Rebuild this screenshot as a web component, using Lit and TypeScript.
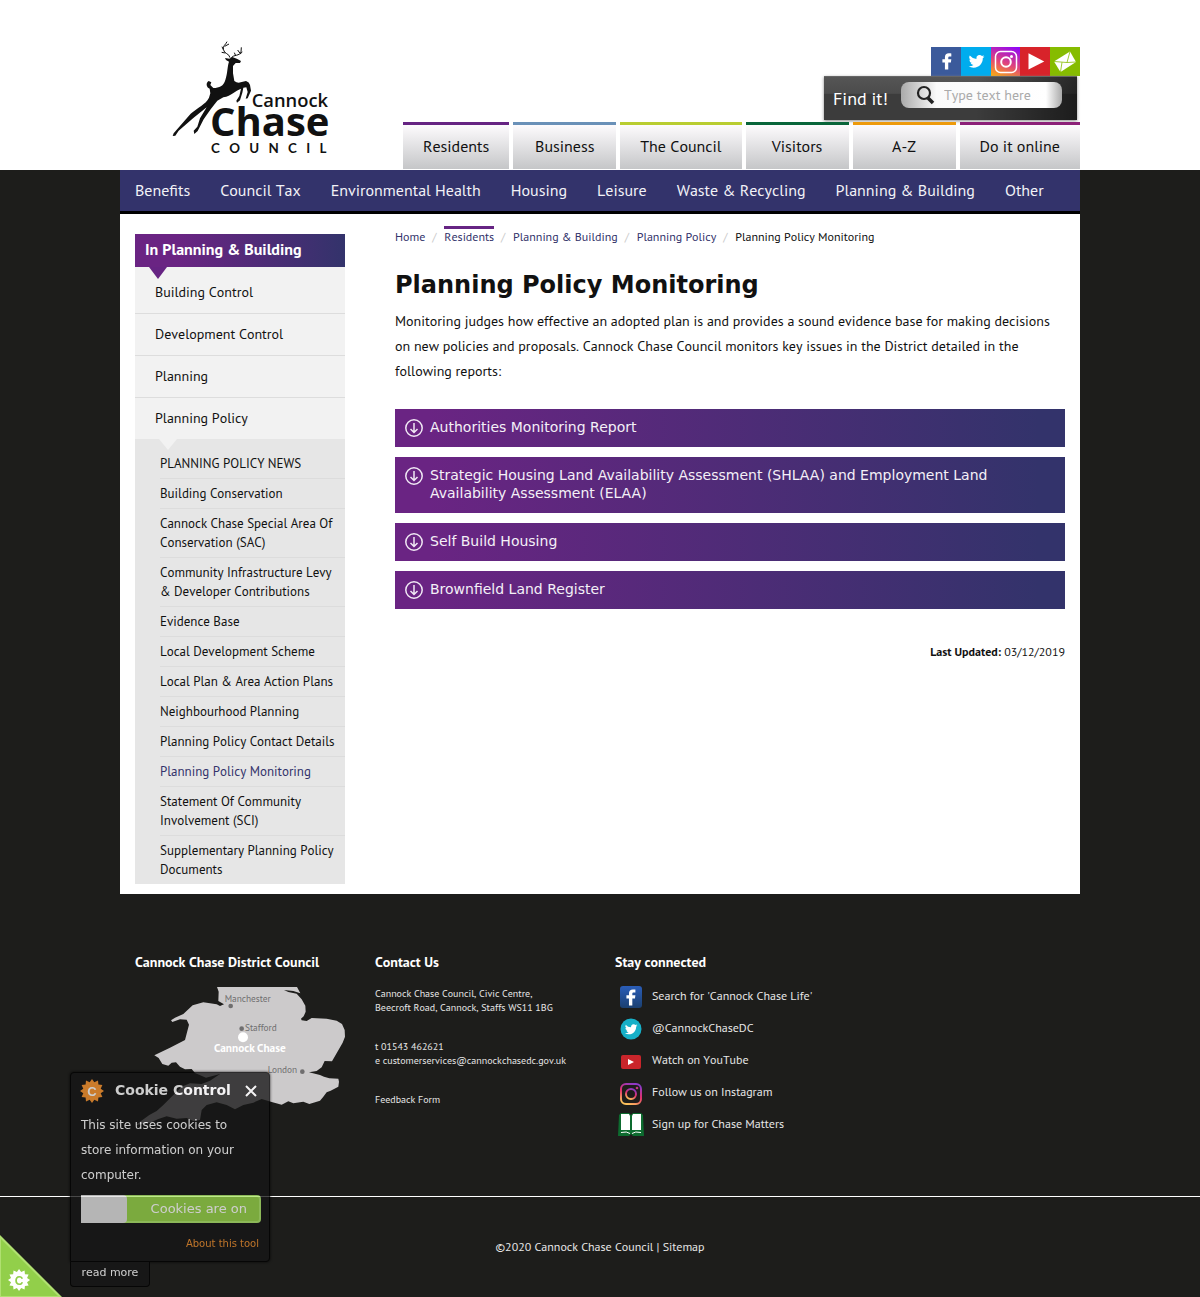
import { LitElement, html, svg, css } from "lit";
import { customElement, state } from "lit/decorators.js";
import { classMap } from "lit/directives/class-map.js";

const bird =
  "M22 6.2a7 7 0 0 1-2.1.6 3.7 3.7 0 0 0 1.6-2 7.3 7.3 0 0 1-2.3.9A3.7 3.7 0 0 0 12.9 9 10.4 10.4 0 0 1 5.3 5.2a3.7 3.7 0 0 0 1.1 4.9 3.7 3.7 0 0 1-1.6-.5 3.7 3.7 0 0 0 2.9 3.7 3.7 3.7 0 0 1-1.6.1 3.7 3.7 0 0 0 3.4 2.5A7.4 7.4 0 0 1 4 17.5 10.4 10.4 0 0 0 9.7 19.1c6.8 0 10.5-5.6 10.5-10.5v-.5A7.5 7.5 0 0 0 22 6.2z";
const letterF = "M14 21v-7.8h3l.5-3.8H14V7.7c0-1 .5-1.5 1.7-1.5h1.8V2.9C17 2.8 16 2.7 14.7 2.7c-2.9 0-4.5 1.6-4.5 4.3v2.4H7.3v3.8h2.9V21z";
const cog = (() => {
  const pts: string[] = [];
  for (let i = 0; i < 24; i++) {
    const r = i % 2 ? 9 : 12;
    const a = (i * Math.PI) / 12;
    pts.push(`${(12 + r * Math.sin(a)).toFixed(1)},${(12 - r * Math.cos(a)).toFixed(1)}`);
  }
  return pts.join(" ");
})();

const logo = svg`<svg class="logo-art" viewBox="30 30 480 345" role="img" aria-label="Cannock Chase Council">
  <path d="M195 84 L208 86 L217 81 L232 87 L243 93 L240 99 L227 99 L219 108 L219 130 L223 153 Q232 160 242 157 L258 153 Q268 156 270 165 L273 182 L263 205 L257 206 L263 186 L259 172 L250 173 L247 188 L240 211 L231 218 L229 212 L238 198 L243 176 C225 182 215 197 190 202 L172 212 L152 238 L131 268 L113 303 L103 312 L101 302 L112 290 L120 265 L140 232 L100 264 L56 302 L46 317 L38 318 L41 310 L92 251 C112 234 138 222 147 203 L151 190 L149 176 C138 172 137 158 146 153 L154 157 L151 165 L160 174 C178 174 191 168 196 150 C203 130 202 108 207 95 L198 90 Z"/>
  <g fill="none" stroke="#111" stroke-width="3"><path d="M210 83C208 70 192 72 190 58C188 48 197 44 201 35M190 59L186 50M196 69L185 67M194 49L207 42M214 83C220 74 240 78 243 66L244 52M240 72L247 66M240 70L233 60M227 77L223 68"/></g>
  <text class="w1" x="275" y="231">Cannock</text>
  <text class="w2" x="150" y="318">Chase</text>
  <text class="w3" x="153" y="370">COUNCIL</text>
</svg>`;

const map = svg`<svg class="map" viewBox="45 141 630 420" role="img" aria-label="Map of Cannock Chase">
  <path fill="#cccacb" d="M291 141H531L541 160L520 153L492 150L505 156L530 161L545 178L556 197L557 215L551 229L543 236L545 241L560 243L575 234L620 236L650 242L666 252L674 270L675 290L668 308L636 364L614 363L605 382L590 393L567 397L600 405L612 410L628 415L655 416L657 425L655 440L632 452L620 457L610 470L600 482L568 492L550 485L520 490L505 484L485 494L455 486L425 477L400 488L370 495L345 508L320 495L290 487L260 495L245 510L240 540L220 543L200 534L170 536L140 529L115 537L90 548L48 555L60 545L88 525L110 513L130 495L160 465L185 440L210 430L245 432L270 422L300 402L258 413L225 399L215 387L195 388L180 380L168 367L155 368L145 377L127 372L116 354L103 346L150 323L195 300L207 254L200 239L180 238L157 246L153 241L165 233L190 222L218 196L250 187L290 193L300 198L312 193L295 183L296 155Z"/>
  <g fill="#6f6e6f"><circle cx="332" cy="198" r="7"/><circle cx="365" cy="266" r="7"/><circle cx="547" cy="395" r="7"/></g>
  <circle cx="369" cy="292" r="15" fill="#fff"/>
  <g class="town"><text x="314" y="185">Manchester</text><text x="375" y="272">Stafford</text><text x="443" y="400">London</text></g>
  <text class="here" x="282" y="335">Cannock Chase</text>
</svg>`;

const social = [
  { label: "Facebook", cls: "fb", art: svg`<path fill="#fff" d=${letterF}/>` },
  { label: "Twitter", cls: "tw", art: svg`<path fill="#fff" transform="translate(-1)" d=${bird}/>` },
  { label: "Instagram", cls: "ig", art: svg`<g fill="none" stroke="#fff"><rect x="1.5" y="1.5" width="21" height="21" rx="5" stroke-width="1.5"/><circle cx="12" cy="12" r="4.8" stroke-width="2"/></g><circle cx="17.5" cy="6.5" r="1.5" fill="#fff"/>` },
  { label: "YouTube", cls: "yt", art: svg`<path fill="#fff" d="M4 2.500L22 12L4 21Z"/>` },
  { label: "Email updates", cls: "em", art: svg`<path fill="#fff" d="M1 11.500L17 1.500L23 12L7.500 22Z"/><path fill="none" stroke="#86bc00" stroke-width=".8" d="M1 11.500L14 12.500L17 1.500M7.500 22L9 12.200M23 12L14 12.500"/>` },
];

const tabs = [
  ["Residents", "purple"],
  ["Business", "blue"],
  ["The Council", "lime"],
  ["Visitors", "green"],
  ["A-Z", "orange"],
  ["Do it online", "magenta"],
];
const topics = ["Benefits", "Council Tax", "Environmental Health", "Housing", "Leisure", "Waste & Recycling", "Planning & Building", "Other"];
const sections = ["Building Control", "Development Control", "Planning", "Planning Policy"];
const policyPages = [
  "PLANNING POLICY NEWS",
  "Building Conservation",
  "Cannock Chase Special Area Of Conservation (SAC)",
  "Community Infrastructure Levy & Developer Contributions",
  "Evidence Base",
  "Local Development Scheme",
  "Local Plan & Area Action Plans",
  "Neighbourhood Planning",
  "Planning Policy Contact Details",
  "Planning Policy Monitoring",
  "Statement Of Community Involvement (SCI)",
  "Supplementary Planning Policy Documents",
];
const reports = [
  "Authorities Monitoring Report",
  "Strategic Housing Land Availability Assessment (SHLAA) and Employment Land Availability Assessment (ELAA)",
  "Self Build Housing",
  "Brownfield Land Register",
];
const follow = [
  {
    text: "Search for 'Cannock Chase Life'",
    art: svg`<defs><linearGradient id="f1" x2="0" y2="1"><stop stop-color="#2a5db8"/><stop offset="1" stop-color="#1b4070"/></linearGradient></defs><rect x="2" y="2" width="22" height="22" rx="3" fill="url(#f1)"/><path fill="#fff" transform="translate(2 3) scale(.88)" d=${letterF}/>`,
  },
  { text: "@CannockChaseDC", art: svg`<circle cx="13" cy="13" r="10.5" fill="#17b0c8"/><path fill="#fff" transform="translate(4 5) scale(.7)" d=${bird}/>` },
  { text: "Watch on YouTube", art: svg`<rect x="3" y="7" width="20" height="14" rx="2" fill="#c9252b"/><path fill="#fff" d="M10 11L16 14L10 17Z"/>` },
  {
    text: "Follow us on Instagram",
    art: svg`<defs><linearGradient id="f2" x1="0.700" y1="0" x2="0.300" y2="1"><stop stop-color="#8a3ac8"/><stop offset=".5" stop-color="#e1306c"/><stop offset="1" stop-color="#fcc25a"/></linearGradient></defs><g fill="none" stroke="url(#f2)" stroke-width="2"><rect x="3" y="4" width="20" height="20" rx="5"/><circle cx="13" cy="14" r="5"/></g><circle cx="19" cy="8" r="1.300" fill="#c13584"/>`,
  },
  {
    text: "Sign up for Chase Matters",
    art: svg`<path fill="#0d6b2f" d="M0 24L1 3L3 1H11L13 3L15 1H23L25 3L26 24H15L13 22L11 24Z"/><path fill="#fff" d="M3 2H11L12 4V18H3ZM15 2H23V18H14V4Z"/><path stroke="#fff" fill="none" d="M3 20.500Q9 19 12 21.500M14 21.500Q17 19 23 20.500"/>`,
  },
];

@customElement("app-root")
export class AppRoot extends LitElement {
  @state() private cookieOpen = true;

  static styles = css`
    :host { display: block; background: #1d1d1b; color: #111; font: 14px/25px "PT Sans", "Noto Sans", sans-serif; font-kerning: none; }
    *, *::before, *::after { box-sizing: border-box; }
    a { color: inherit; text-decoration: none; }
    ul, ol { list-style: none; margin: 0; padding: 0; }
    h1, h2, p { margin: 0; }
    svg { display: block; }
    .wrap { max-width: 960px; margin: 0 auto; }

    .header { background: #fff; padding-top: 40px; }
    .header .wrap { display: flex; justify-content: space-between; align-items: flex-start; }
    .logo { margin-left: 50px; }
    .logo-art { width: 160px; height: 115px; fill: #111; overflow: visible; }
    .logo-art text { font-family: "Open Sans", sans-serif; font-weight: 700; }
    .logo-art .w1 { font-size: 55px; font-weight: 600; }
    .w2 { font-size: 120px; }
    .logo-art .w3 { font-family: Lato, sans-serif; font-size: 40px; letter-spacing: 28px; }
    .tools { display: flex; flex-direction: column; align-items: flex-end; padding-top: 7px; }
    .social { display: flex; }
    .social a { display: grid; place-items: center; width: 30px; height: 29px; }
    .social svg { width: 24px; height: 24px; }
    .social .fb svg, .social .yt svg, .social .tw svg { width: 21px; height: 21px; }
    .fb { background: #3b5a9b; }
    .tw { background: #00acee; }
    .social .ig { width: 29px; background: linear-gradient(20deg, #fdb10a, #e0457b 45%, #8a00ff); }
    .yt { background: #d8232a; }
    .em { background: #86bc00; }
    .search { display: flex; align-items: center; justify-content: space-between; width: 253px; height: 44px; margin: 0 3px 2px 0; padding: 0 15px 0 9px; color: #fff; font-size: 18px;
      background: linear-gradient(90deg, #0000 60%, #0008), linear-gradient(#555 0, #4c4c4c 38%, #3c3c3c 40%, #3c3c3c 100%); box-shadow: 0 1px 3px #888; border-top: 1px solid #666; }
    .search label { white-space: nowrap; }
    .pill { display: flex; align-items: center; width: 161px; height: 26px; margin-bottom: 7px; padding-left: 14px; border-radius: 8px;
      background: linear-gradient(90deg, #aaa, #fafafa 22%, #fff 90%, #aaa); }
    .pill button { border: 0; padding: 0; background: none; }
    .pill svg { width: 20px; height: 20px; }
    .pill input { flex: 1; min-width: 0; height: 25px; margin: 0 10px 0 9px; padding: 0; border: 0; outline: 0; background: none; font: inherit; font-size: 14px; color: #111; }
    .pill input::placeholder { color: #aaa; opacity: 1; }

    .tabs { display: flex; gap: 4px; margin-bottom: 1px; }
    .tabs a { display: block; min-width: 103px; height: 47px; padding: 0 20px; border-top-width: 3px; border-top-style: solid; text-align: center; font-size: 16px; line-height: 42px; background: linear-gradient(#fdfbfd, #c5c6c8); }
    .purple { border-color: #662483; }
    .blue { border-color: #6a91b8; }
    .lime { border-color: #b9cd31; }
    .green { border-color: #09653a; }
    .orange { border-color: #ed9a0c; }
    .magenta { border-color: #8c2078; }

    .topics { display: flex; background: #33336b; border-bottom: 3px solid #000; color: #f2f2f7; font-size: 16px; line-height: 41px; }
    .topics a { display: block; padding: 0 15px; }

    .page { display: grid; grid-template-columns: 210px 1fr; gap: 50px; padding: 0 15px 10px; background: #fff; }
    .side { padding-top: 20px; }
    .side h2 { position: relative; padding: 0 10px 2px; font-size: 16px; line-height: 31px; color: #fff; background: linear-gradient(90deg, #6a2483 20%, #33336b); }
    .side h2::after, .sub::before { content: ""; position: absolute; top: 100%; left: 14px; border: solid transparent; border-width: 12px 9px 0; border-top-color: #662483; }
    .sections { background: #f2f2f2; padding-top: 5px; }
    .sections > li > a { display: block; height: 42px; padding: 0 20px; line-height: 41px; border-bottom: 1px solid #ddd; }
    .sections > li:last-child > a { height: 41px; border: 0; }
    .sub { position: relative; padding: 10px 0 0 25px; background: #e6e6e6; font-size: 13px; line-height: 19px; }
    .sub::before { top: 0; left: 24px; border-width: 11px 9px 0; border-top-color: #f2f2f2; }
    .sub a { display: block; padding: 5px 10px 5px 0; border-bottom: 1px solid #dcdcdc; }
    .sub li:last-child a { border: 0; }
    .sub .current { color: #33336b; }

    .crumbs { display: flex; padding-top: 12px; font-size: 12px; line-height: 15px; color: #33336b; }
    .crumbs li { display: flex; }
    .crumbs li + li::before { content: "/"; width: 19px; padding: 3px 0 0 7px; color: #ccc; }
    .crumbs .here { color: #111; }
    .crumbs a { border-top: 3px solid transparent; }
    .crumbs .on { border-color: #662483; }
    h1 { margin-top: 26px; font: bold 24px/30px "DejaVu Sans", sans-serif; }
    .intro { margin-top: 9px; }
    .reports { display: grid; gap: 10px; margin: 25px 0 30px; }
    .reports button { display: grid; grid-template-columns: 18px 1fr; gap: 7px; width: 100%; padding: 9px 10px 11px; border: 0; color: #f4f0f7; text-align: left; font: 14px/18px "DejaVu Sans", sans-serif; background: linear-gradient(90deg, #6a2483 5%, #33336b 96%); }
    .reports svg { width: 18px; height: 18px; margin: 1px 0 -1px; }
    .updated { text-align: right; font-size: 12px; }

    .foot { display: grid; grid-template-columns: 210px 210px 1fr; gap: 30px; padding: 56px 15px 55px; color: #e6e6e6; }
    .foot h2 { font-size: 14px; line-height: 25px; color: #fff; }
    .map { width: 210px; height: 140px; margin-top: 12px; }
    .town { font: 28px "PT Sans", sans-serif; fill: #6f6e6f; }
    .map .here { font: bold 34px "PT Sans", sans-serif; fill: #fff; }
    .contact p { margin: 12px 0 25px; font-size: 10px; line-height: 14px; white-space: nowrap; }
    .contact p + p { margin-top: 0; }
    .follow { margin-top: 6px; font-size: 12px; }
    .follow a { display: flex; align-items: center; gap: 8px; height: 32px; padding: 0 0 2px 3px; }
    .follow svg { width: 26px; height: 26px; margin-top: 2px; }
    .follow span { padding-bottom: 2px; }
    .legal { border-top: 1px solid #fff; padding: 37px 0 38px; text-align: center; font-size: 12px; color: #e6e6e6; }

    .cookie { position: fixed; left: 70px; bottom: 10px; width: 200px; opacity: 0.78; color: #fff; font: 12px/25px "DejaVu Sans", sans-serif; }
    .panel { padding: 5px 8px 5px 10px; background: #171717; border: 1px solid #000; border-radius: 4px 4px 4px 0; box-shadow: 0 0 3px #000; }
    .panel header { display: flex; align-items: center; }
    .panel h2 { flex: 1; margin-left: 11px; font-size: 14px; }
    .panel header svg { width: 24px; height: 24px; margin-left: -1px; }
    .panel header button { width: 20px; height: 20px; padding: 0; border: 0; background: none; }
    .panel header button svg { width: 20px; height: 20px; margin: 0; }
    .panel p { margin: 10px 0 7px; }
    .cog { fill: #fb9630; }
    .switch { display: flex; width: 180px; height: 28px; padding: 0; border: 2px solid #ace56a; border-left: 0; border-radius: 4px; background: #97d348; color: #fff; font: 13px/24px "DejaVu Sans", sans-serif; }
    .switch i { width: 46px; height: 28px; margin-top: -2px; background: #e0e0e0; border-radius: 0 4px 4px 0; }
    .switch span { flex: 1; text-align: right; padding-right: 12px; }
    .about { display: block; margin-top: 8px; padding-right: 2px; text-align: right; font-size: 10px; color: #ec8d2d; }
    .more { display: block; width: 80px; height: 25px; padding: 0 0 2px; border: 1px solid #000; border-top: 0; border-radius: 0 0 4px 4px; background: #171717; color: #fff; font: 11px/20px "DejaVu Sans", sans-serif; }
    .corner { position: fixed; left: 0; bottom: 0; width: 62px; height: 62px; padding: 0; border: 0; background: none; }
    .corner svg { width: 62px; height: 62px; }
    .hidden { display: none; }
    .c { font: bold 13px "Liberation Sans", sans-serif; text-anchor: middle; }
  `;

  private toggle = () => {
    this.cookieOpen = !this.cookieOpen;
  };

  render() {
    return html`
      <header class="header">
        <div class="wrap">
          <a class="logo" href="#">${logo}</a>
          <div class="tools">
            <ul class="social">
              ${social.map((s) => html`<li><a class=${s.cls} href="#" aria-label=${s.label}><svg viewBox="0 0 24 24">${s.art}</svg></a></li>`)}
            </ul>
            <form class="search" @submit=${(e: Event) => e.preventDefault()}>
              <label for="q">Find it!</label>
              <div class="pill">
                <button aria-label="Search"><svg viewBox="0 0 20 20" fill="none" stroke="#222"><circle cx="9" cy="8" r="6" stroke-width="2.2"/><path d="M13 13L18 18" stroke-width="3.5"/></svg></button>
                <input id="q" type="text" placeholder="Type text here" />
              </div>
            </form>
            <nav><ul class="tabs">${tabs.map(([t, c]) => html`<li><a class=${c} href="#">${t}</a></li>`)}</ul></nav>
          </div>
        </div>
      </header>
      <nav class="wrap"><ul class="topics">${topics.map((t) => html`<li><a href="#">${t}</a></li>`)}</ul></nav>
      <div class="wrap page">
        <aside class="side">
          <h2>In Planning &amp; Building</h2>
          <ul class="sections">
            ${sections.map(
              (s, i) => html`<li>
                <a href="#">${s}</a>
                ${i === 3 ? html`<ul class="sub">${policyPages.map((p) => html`<li><a href="#" class=${classMap({ current: p === "Planning Policy Monitoring" })}>${p}</a></li>`)}</ul>` : ""}
              </li>`,
            )}
          </ul>
        </aside>
        <main>
          <ol class="crumbs">
            <li><a href="#">Home</a></li><li><a class="on" href="#">Residents</a></li><li><a href="#">Planning &amp; Building</a></li><li><a href="#">Planning Policy</a></li><li><a class="here" href="#" aria-current="page">Planning Policy Monitoring</a></li>
          </ol>
          <h1>Planning Policy Monitoring</h1>
          <p class="intro">Monitoring judges how effective an adopted plan is and provides a sound evidence base for making decisions on new policies and proposals. Cannock Chase Council monitors key issues in the District detailed in the following reports:</p>
          <div class="reports">
            ${reports.map(
              (r) => html`<button><svg viewBox="0 0 18 18" fill="none" stroke="#f0e8f4" stroke-width="1.5"><circle cx="9" cy="9" r="8.2"/><path d="M9 4V13.500M5.500 10L9 13.500L12.500 10"/></svg><span>${r}</span></button>`,
            )}
          </div>
          <p class="updated"><b>Last Updated:</b> 03/12/2019</p>
        </main>
      </div>
      <footer>
        <div class="wrap foot">
          <section><h2>Cannock Chase District Council</h2>${map}</section>
          <section class="contact">
            <h2>Contact Us</h2>
            <p>Cannock Chase Council, Civic Centre,<br />Beecroft Road, Cannock, Staffs WS11 1BG</p>
            <p>t 01543 462621<br />e <a href="mailto:customerservices@cannockchasedc.gov.uk">customerservices@cannockchasedc.gov.uk</a></p>
            <p><a href="#">Feedback Form</a></p>
          </section>
          <section>
            <h2>Stay connected</h2>
            <ul class="follow">${follow.map((f) => html`<li><a href="#"><svg viewBox="0 0 26 26">${f.art}</svg><span>${f.text}</span></a></li>`)}</ul>
          </section>
        </div>
        <div class="legal">©2020 Cannock Chase Council | <a href="#">Sitemap</a></div>
      </footer>
      <aside class=${classMap({ cookie: true, hidden: !this.cookieOpen })}>
        <div class="panel">
          <header>
            <svg viewBox="0 0 24 24"><polygon class="cog" points=${cog} /><text class="c" x="12" y="17" fill="#fff">C</text></svg>
            <h2>Cookie Control</h2>
            <button aria-label="Close" @click=${this.toggle}><svg viewBox="0 0 20 20" stroke="#fff" stroke-width="2"><path d="M5 5L15 15M15 5L5 15" /></svg></button>
          </header>
          <p>This site uses cookies to store information on your computer.</p>
          <button class="switch" role="switch" aria-checked="true"><i></i><span>Cookies are on</span></button>
          <a class="about" href="#">About this tool</a>
        </div>
        <button class="more">read more</button>
      </aside>
      <button class="corner" aria-label="Cookie Control" @click=${this.toggle}>
        <svg viewBox="0 0 62 62">
          <path d="M0 0L62 62H0Z" fill="#b0e070" /><path d="M1 4L58 61H1Z" fill="#92cf4a" />
          <g transform="translate(8 34) scale(.92)"><polygon points=${cog} fill="#fff" /><text class="c" x="12" y="17" fill="#92cf4a">C</text></g>
        </svg>
      </button>
    `;
  }
}
